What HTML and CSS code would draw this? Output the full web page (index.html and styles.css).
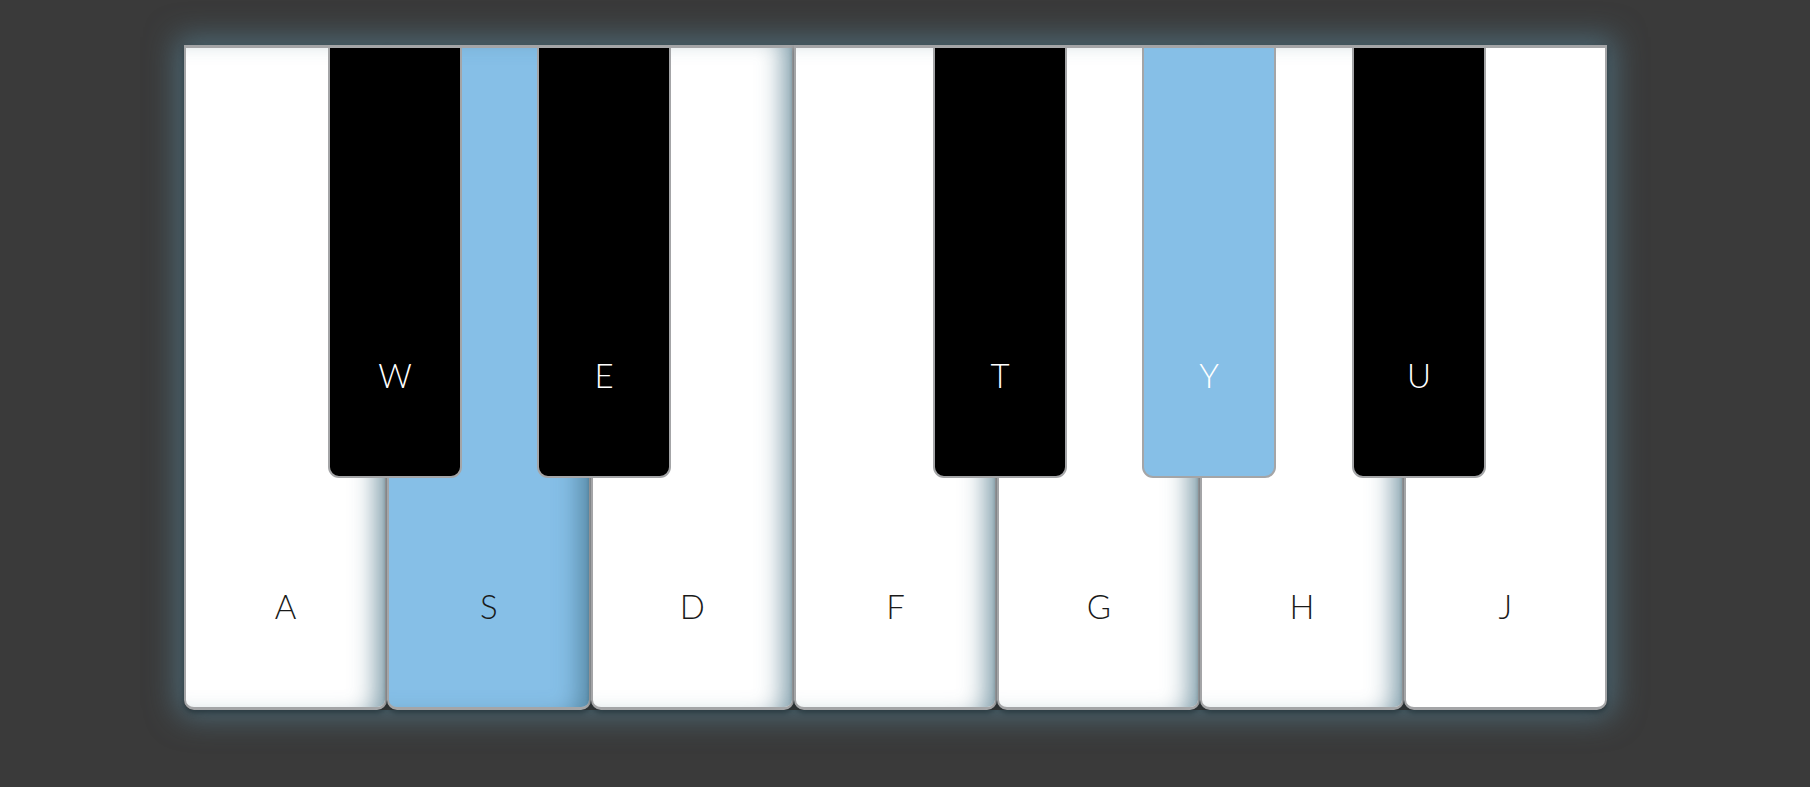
FILE: index.html
```html
<!DOCTYPE html>
<html lang="en">
<head>
    <meta charset="UTF-8">
    <title>Piano</title>
    <link rel="stylesheet" href="styles.css">
</head>
<body>
    <div id="piano">
        <div class="key white"><span>A</span></div>
        <div class="key white active"><span>S</span></div>
        <div class="key white"><span>D</span></div>
        <div class="key white"><span>F</span></div>
        <div class="key white"><span>G</span></div>
        <div class="key white"><span>H</span></div>
        <div class="key white last"><span>J</span></div>

        <div class="key black k-w"><span>W</span></div>
        <div class="key black k-e"><span>E</span></div>
        <div class="key black k-t"><span>T</span></div>
        <div class="key black active k-y"><span>Y</span></div>
        <div class="key black k-u"><span>U</span></div>
    </div>
</body>
</html>
```

FILE: styles.css
```css
*{
    margin: 0;
    padding: 0;
    box-sizing: border-box;
}
html, body {
    height: 100%;
}
body {
    background: #3a3a3a;
    font-family: Lato, "Open Sans", sans-serif;
    font-weight: 300;
    padding: 45px 0 0 184px;
}
#piano {
    position: relative;
    display: flex;
    width: 1423px;
    height: 665px;
    border-radius: 0 0 9px 9px;
    box-shadow: 0 0 30px 8px rgba(90, 135, 155, 0.6);
}
.key {
    display: flex;
    flex-direction: column;
    justify-content: flex-end;
    align-items: center;
    border: 2px solid #a4a5a7;
    border-top-width: 3px;
    font-size: 33px;
    line-height: 40px;
    cursor: pointer;
}
.white {
    flex: 1;
    height: 100%;
    padding-bottom: 81px;
    background: #fff;
    color: #1a1a1a;
    border-width: 3px 2px 3px;
    border-radius: 0 0 10px 10px;
    /* shade on the right edge where the next key sits */
    box-shadow: inset -22px 0 26px -14px rgba(60, 105, 125, 0.7), 0 3px 5px rgba(20, 35, 40, 0.55);
}
.white.last {
    box-shadow: 0 3px 5px rgba(20, 35, 40, 0.55);
}
.black {
    position: absolute;
    top: 0;
    width: 134px;
    height: 433px;
    padding-bottom: 81px;
    background: #000;
    color: #fff;
    border-radius: 0 0 11px 11px;
}
.key.active {
    background: #86bfe7;
}
.k-w { left: 144px; }
.k-e { left: 353px; }
.k-t { left: 749px; }
.k-y { left: 958px; }
.k-u { left: 1168px; }
```
